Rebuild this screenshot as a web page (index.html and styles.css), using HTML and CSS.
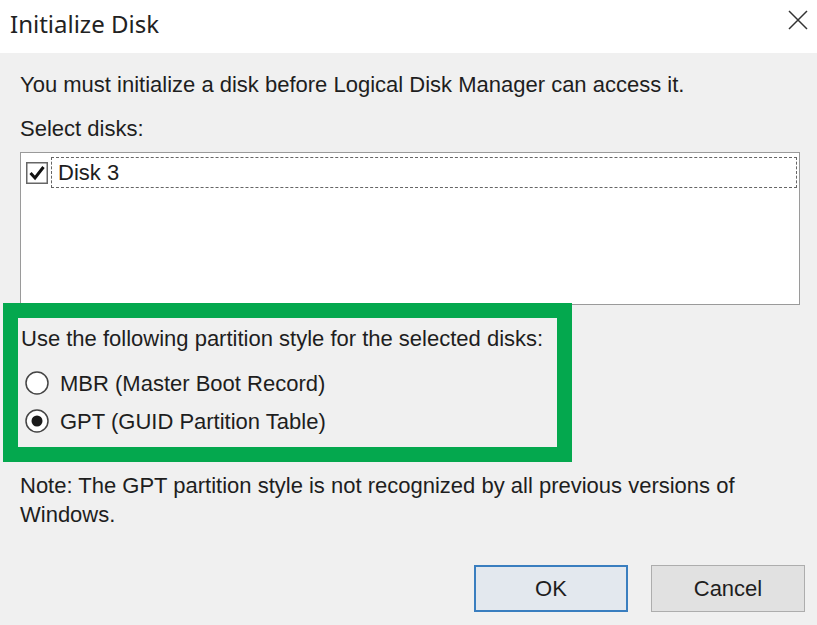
FILE: index.html
```html
<!DOCTYPE html>
<html>
<head>
<meta charset="utf-8">
<title>Initialize Disk</title>
<link rel="stylesheet" href="styles.css">
</head>
<body>
<div class="dialog">
  <div class="titlebar">
    <div class="title">Initialize Disk</div>
    <svg class="close" width="22" height="22" viewBox="0 0 22 22">
      <path d="M2 2 L20 20 M20 2 L2 20" stroke="#333" stroke-width="1.5" fill="none"/>
    </svg>
  </div>
  <div class="content">
    <p class="intro">You must initialize a disk before Logical Disk Manager can access it.</p>
    <p class="label">Select disks:</p>
    <div class="listbox">
      <div class="row">
        <svg class="check" width="22" height="22" viewBox="0 0 22 22">
          <rect x="0.75" y="0.75" width="20.5" height="20.5" fill="#fff" stroke="#666" stroke-width="1.5"/>
          <path d="M4.5 11 L9 16 L17.5 5" stroke="#111" stroke-width="3" fill="none"/>
        </svg>
        <div class="focus">Disk 3</div>
      </div>
    </div>
    <div class="group">
      <p class="group-label">Use the following partition style for the selected disks:</p>
      <div class="radio-row">
        <svg class="radio" width="24" height="24" viewBox="0 0 24 24">
          <circle cx="12" cy="12" r="11" fill="#fff" stroke="#444" stroke-width="1.5"/>
        </svg>
        <span>MBR (Master Boot Record)</span>
      </div>
      <div class="radio-row">
        <svg class="radio" width="24" height="24" viewBox="0 0 24 24">
          <circle cx="12" cy="12" r="11" fill="#fff" stroke="#444" stroke-width="1.5"/>
          <circle cx="12" cy="12" r="5.5" fill="#1a1a1a"/>
        </svg>
        <span>GPT (GUID Partition Table)</span>
      </div>
    </div>
    <p class="note">Note: The GPT partition style is not recognized by all previous versions of Windows.</p>
    <div class="buttons">
      <div class="btn btn-default">OK</div>
      <div class="btn">Cancel</div>
    </div>
  </div>
</div>
</body>
</html>
```
FILE: styles.css
```css
* { box-sizing: border-box; }
html, body { margin: 0; padding: 0; }
body {
  width: 817px;
  height: 625px;
  overflow: hidden;
  background: #f0f0f0;
  font-family: "Liberation Sans", Arial, sans-serif;
  font-size: 22px;
  color: #1e1e1e;
}
.dialog {
  width: 817px;
  height: 625px;
  display: flex;
  flex-direction: column;
}
.titlebar {
  height: 53px;
  background: #fff;
  display: flex;
  justify-content: space-between;
  align-items: flex-start;
  padding: 0 8px 0 10px;
}
.title {
  font-family: "Noto Sans", "Open Sans", sans-serif;
  font-size: 24px;
  line-height: 30px;
  margin-top: 9px;
  color: #222;
}
.close { margin-top: 9px; }
.content {
  flex: 1;
  background: #f0f0f0;
  padding-top: 19px;
}
p { margin: 0; }
.intro {
  line-height: 26px;
  padding-left: 20px;
}
.label {
  line-height: 26px;
  padding-left: 20px;
  margin-top: 18px;
}
.listbox {
  margin: 10px 0 0 20px;
  width: 780px;
  height: 153px;
  background: #fff;
  border: 1px solid #9a9a9a;
  padding: 4px 2px 0 5px;
}
.row {
  display: flex;
  align-items: center;
  height: 31px;
}
.check { flex: none; margin-right: 3px; }
.focus {
  flex: 1;
  height: 31px;
  line-height: 29px;
  border: 1px dashed #666;
  padding-left: 6px;
}
.group {
  margin: -2px 0 0 3px;
  width: 569px;
  height: 159px;
  border: 15px solid #04a84e;
  padding: 8px 3px 0 3px;
}
.group-label { line-height: 26px; }
.radio-row {
  display: flex;
  align-items: center;
  height: 38px;
}
.radio-row:first-of-type { margin-top: 13px; }
.radio { flex: none; margin: -3px 11px 0 4px; }
.note {
  margin-top: 9px;
  padding-left: 20px;
  width: 780px;
  line-height: 29px;
}
.buttons {
  display: flex;
  justify-content: flex-end;
  gap: 23px;
  padding-right: 12px;
  margin-top: 36px;
}
.btn {
  width: 154px;
  height: 47px;
  background: #e1e1e1;
  border: 1px solid #adadad;
  display: flex;
  align-items: center;
  justify-content: center;
}
.btn-default {
  border: 2px solid #3a7ebf;
  background: #e3e8ee;
}
```
